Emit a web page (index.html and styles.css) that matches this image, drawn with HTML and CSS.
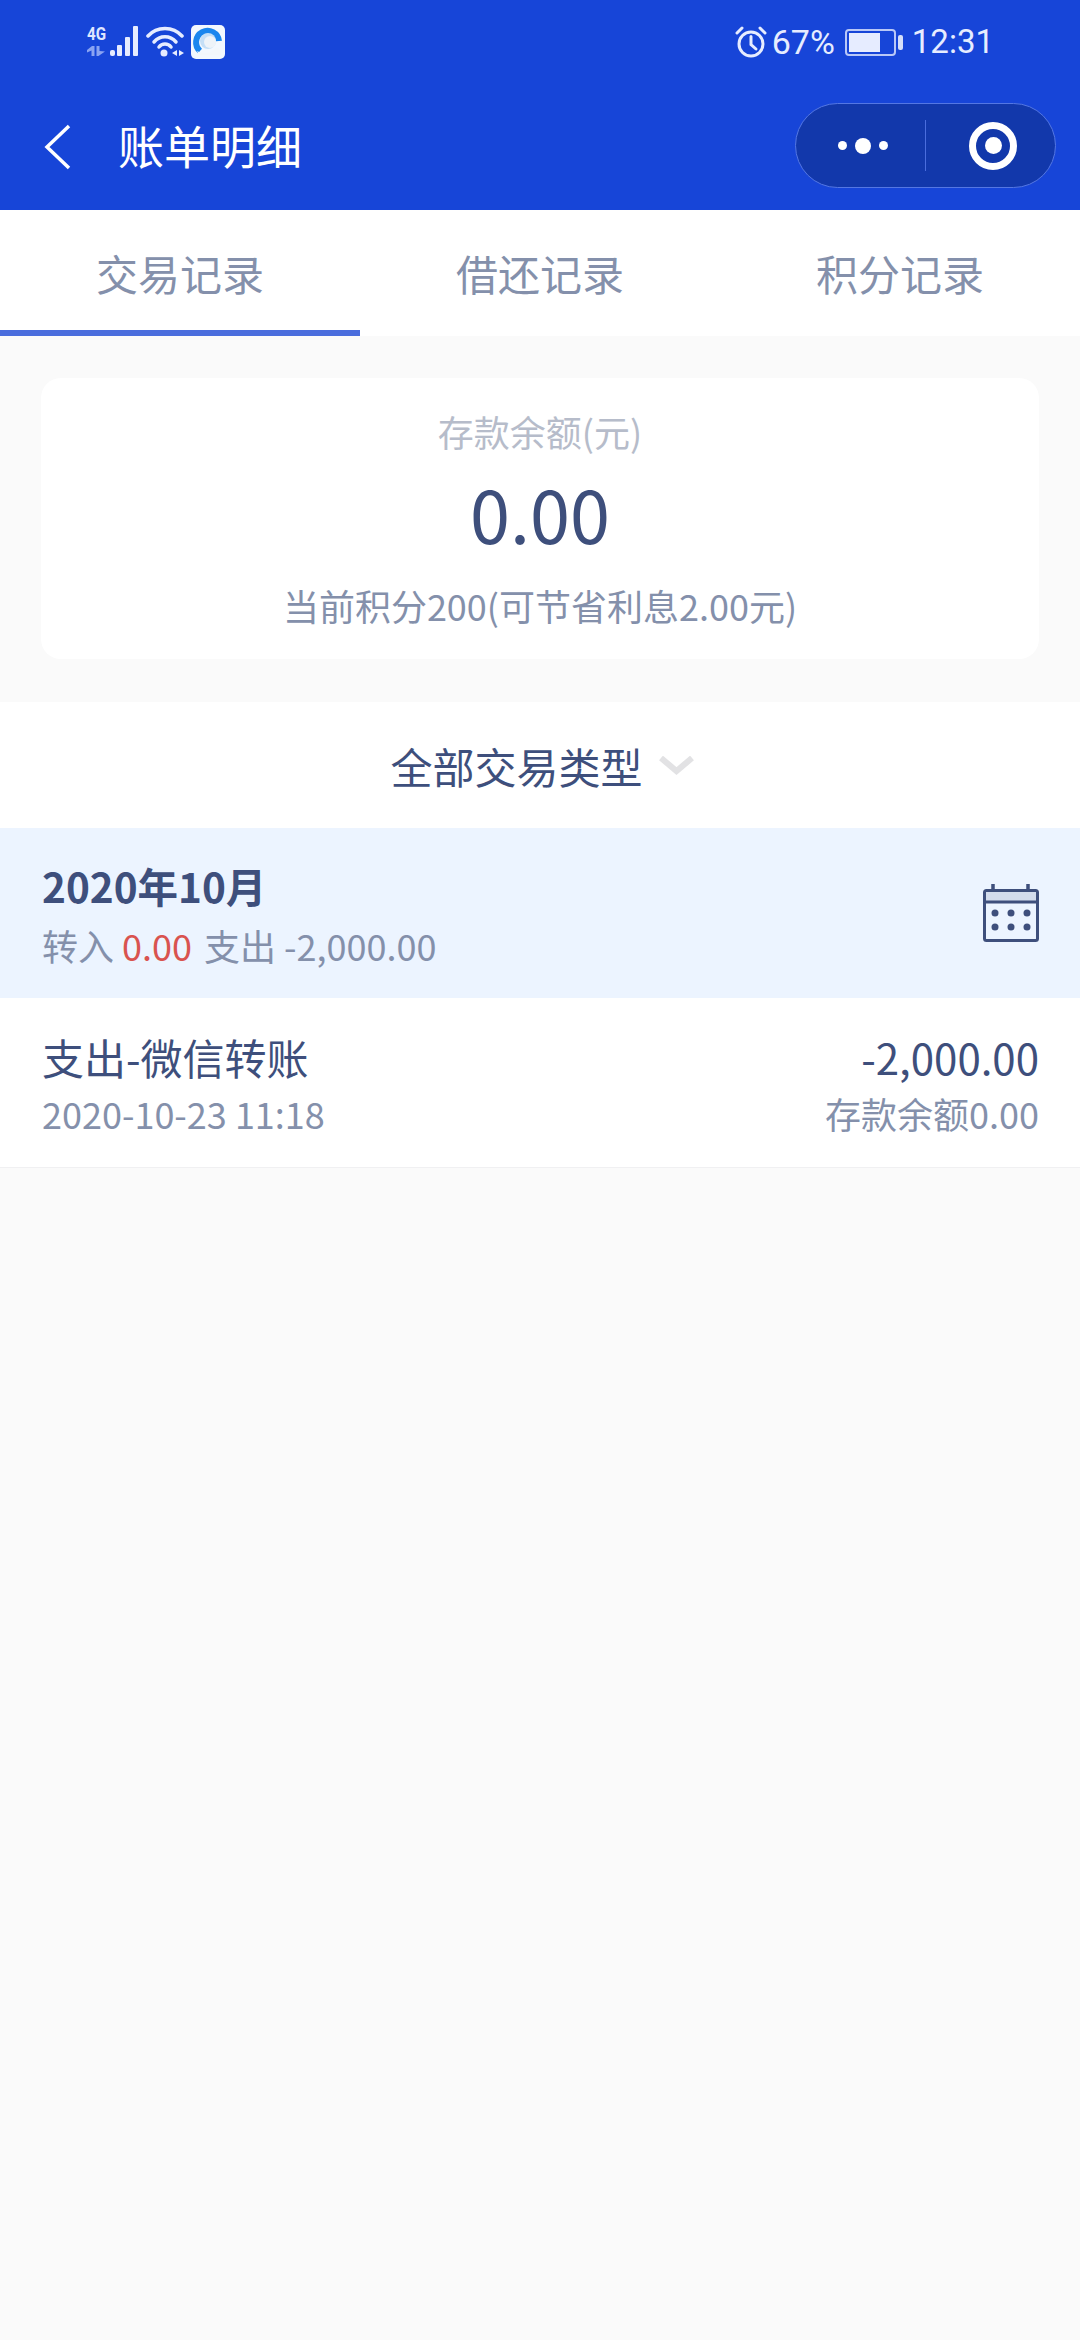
FILE: index.html
```html
<!DOCTYPE html>
<html lang="zh-CN">
<head>
<meta charset="utf-8">
<title>账单明细</title>
<link rel="stylesheet" href="styles.css">
</head>
<body>
<div class="page">
  <header class="head">
    <div class="status">
      <div class="status-left">
        <div class="net"><span class="net-4g">4G</span>
          <svg class="net-arrows" width="18" height="10" viewBox="0 0 18 10"><path d="M0 4 5 0H7.500V10H4.500V4.500L0 6.500zM9.500 0H12.500V5L18 5.500 11.500 10H9.500z" fill="#8aa3f2"/></svg>
        </div>
        <svg class="bars" width="28" height="30" viewBox="0 0 28 30"><g fill="#e6ecff"><rect x="0" y="24" width="5" height="6" rx="2"/><rect x="7" y="19" width="5" height="11" rx="1"/><rect x="15" y="11" width="5" height="19" rx="1"/><rect x="23" y="0" width="5" height="30" rx="1"/></g></svg>
        <svg class="wifi" width="38" height="31" viewBox="0 0 38 31"><g fill="none" stroke="#e6ecff" stroke-width="3.5" stroke-linecap="round"><path d="M2 10C11 0 27 0 36 10"/><path d="M8 16C14 9 24 9 30 16"/><path d="M13 21C16 17 22 17 25 21"/></g><circle cx="18" cy="27" r="3.5" fill="#e6ecff"/><path d="M31 24V30L26 27zM33 24V30L38 27z" fill="#e6ecff"/></svg>
        <svg class="qq" width="34" height="34" viewBox="0 0 34 34"><rect width="34" height="34" rx="5" fill="#f3f8fe"/><path d="M9 26A11.500 11.500 0 1 1 28 16" fill="none" stroke="#1a86ee" stroke-width="6"/><circle cx="17" cy="16" r="8" fill="#c5dff6"/><circle cx="19" cy="17" r="6" fill="#eef3f8"/><path d="M6 26C14 30 21 28 24 23 28 22 31 25 30 30H8z" fill="#f3f7fb"/></svg>
      </div>
      <div class="status-right">
        <svg class="alarm" width="32" height="32" viewBox="0 0 32 32"><g fill="none" stroke="#e6ecff" stroke-linecap="round"><circle cx="16" cy="18" r="12" stroke-width="3"/><path d="M16 10.500V18.500L21 23" stroke-width="3"/><path d="M2 7 7 2M30 7 25 2" stroke-width="3"/></g></svg>
        <span class="pct">67%</span>
        <div class="battery"><div class="battery-body"><div class="battery-fill"></div></div><div class="battery-cap"></div></div>
        <span class="clock">12:31</span>
      </div>
    </div>
    <nav class="nav">
      <svg class="back" width="28" height="46" viewBox="0 0 28 46"><path d="M25 2 3 23 25 44" fill="none" stroke="#fff" stroke-width="3.5"/></svg>
      <h1 class="title">账单明细</h1>
      <div class="capsule">
        <div class="cap-more"><i class="dot"></i><i class="dot dot-lg"></i><i class="dot"></i></div>
        <div class="cap-line"></div>
        <div class="cap-target"><i class="target-core"></i></div>
      </div>
    </nav>
  </header>

  <div class="tabs">
    <div class="tab tab-on">交易记录</div>
    <div class="tab">借还记录</div>
    <div class="tab">积分记录</div>
  </div>

  <section class="summary">
    <div class="card">
      <div class="card-label">存款余额(元)</div>
      <div class="card-amount">0.00</div>
      <div class="card-note">当前积分200(可节省利息2.00元)</div>
    </div>
  </section>

  <div class="filter">
    <span>全部交易类型</span>
    <svg class="chev" width="35" height="19" viewBox="0 0 35 19"><path d="M2 2 17.5 15 33 2" fill="none" stroke="#e2e2e4" stroke-width="6"/></svg>
  </div>

  <div class="month">
    <div>
      <div class="month-title">2020年10月</div>
      <div class="month-sub">转入 <span class="red">0.00</span><span class="sub-out">支出 -2,000.00</span></div>
    </div>
    <svg class="cal" width="56" height="58" viewBox="0 0 56 58"><rect x="1.5" y="6.5" width="53" height="50" rx="2" fill="none" stroke="#3e4f7c" stroke-width="3"/><path d="M3 8H53V17H3z" fill="#d3dcec"/><path d="M1.5 18H54.500" stroke="#3e4f7c" stroke-width="3"/><path d="M10 0V6M45 0V6" stroke="#3e4f7c" stroke-width="3.5"/><g fill="#3e4f7c"><circle cx="12" cy="29" r="3.500"/><circle cx="28" cy="29" r="3.500"/><circle cx="44" cy="29" r="3.500"/><circle cx="12" cy="43" r="3.500"/><circle cx="28" cy="43" r="3.500"/><circle cx="44" cy="43" r="3.500"/></g></svg>
  </div>

  <div class="item">
    <div>
      <div class="item-name">支出-微信转账</div>
      <div class="item-time">2020-10-23 11:18</div>
    </div>
    <div class="item-right">
      <div class="item-amount">-2,000.00</div>
      <div class="item-bal">存款余额0.00</div>
    </div>
  </div>
</div>
</body>
</html>
```
FILE: styles.css
```css
* { box-sizing: border-box; }
html, body { margin: 0; padding: 0; }
body {
  width: 1080px;
  height: 2340px;
  overflow: hidden;
  background: #fafafa;
  font-family: "Noto Sans CJK SC", "Noto Sans", sans-serif;
  color: #3e4f7c;
}
.page { display: flex; flex-direction: column; height: 100%; }

.head { height: 210px; background: #1745d8; color: #fff; flex: none; }
.status { height: 84px; display: flex; justify-content: space-between; align-items: center; padding: 0 86px 0 87px; }
.status-left { display: flex; align-items: flex-start; }
.net { width: 18px; height: 30px; display: flex; flex-direction: column; justify-content: space-between; }
.net-4g { font-family: "Roboto", sans-serif; font-size: 19px; line-height: 15px; font-weight: 700; color: #dfe6ff; transform: scaleX(.8); transform-origin: left; }
.net-arrows { display: block; }
.bars { margin-left: 5px; }
.wifi { margin-left: 8px; }
.qq { margin-left: 7px; margin-top: -1px; }
.status-right { display: flex; align-items: center; color: #e6ecff; }
.pct, .clock { font-family: "Roboto", sans-serif; line-height: 40px; }
.pct { font-size: 34px; margin-left: 5px; }
.clock { font-size: 33px; margin-left: 9px; }
.battery { display: flex; align-items: center; margin-left: 10px; }
.battery-body { width: 51px; height: 27px; border: 2px solid #b9c8f7; border-radius: 4px; padding: 2px; }
.battery-fill { width: 31px; height: 100%; background: #e6ecff; }
.battery-cap { width: 5px; height: 15px; margin-left: 2px; background: #d5dffa; border-radius: 2px; }

.nav { height: 126px; display: flex; align-items: center; padding: 0 24px 0 44px; }
.back { flex: none; }
.title { margin: -6px 0 0 46px; font-size: 46px; line-height: 60px; font-weight: 400; flex: 1; }
.capsule {
  width: 261px; height: 85px; display: flex; align-items: center;
  background: #1238ab; border: 1px solid #5477e3; border-radius: 43px;
  margin-top: -3px;
}
.cap-more { width: 129px; display: flex; align-items: center; justify-content: flex-end; gap: 8px; padding-right: 37px; }
.dot { width: 9px; height: 9px; border-radius: 50%; background: #fff; display: block; }
.dot-lg { width: 16px; height: 16px; }
.cap-line { width: 1px; height: 51px; background: #4a6ddd; }
.cap-target {
  width: 48px; height: 48px; margin-left: 43px; border: 7px solid #fff; border-radius: 50%;
  display: flex; align-items: center; justify-content: center;
}
.target-core { width: 17px; height: 17px; border-radius: 50%; background: #fff; display: block; }

.tabs { height: 126px; display: flex; background: #fff; flex: none; }
.tab { flex: 1; display: flex; justify-content: center; align-items: center; font-size: 42px; color: #8490ab; padding-bottom: 2px; }
.tab-on { box-shadow: inset 0 -6px 0 #4a6ddd; }

.summary { padding: 42px 41px 43px; flex: none; }
.card { height: 281px; background: #fff; border-radius: 20px; display: flex; flex-direction: column; align-items: center; }
.card-label { margin-top: 29px; font-size: 36px; line-height: 48px; color: #b6bcca; }
.card-amount { margin-top: 10px; font-size: 72px; line-height: 96px; color: #3e4f7c; }
.card-note { margin-top: 20px; font-size: 36px; line-height: 48px; color: #8490ab; }

.filter { height: 126px; background: #fff; display: flex; align-items: center; justify-content: center; gap: 16px; padding-left: 4px; font-size: 42px; color: #3e4f7c; flex: none; }

.month { height: 170px; background: #ecf4ff; display: flex; justify-content: space-between; align-items: center; padding: 0 41px 0 42px; flex: none; }
.month-title { font-size: 40.5px; line-height: 56px; font-weight: 700; color: #3e4f7c; }
.month-sub { font-size: 36px; line-height: 48px; color: #8490ab; margin-top: 7px; }
.red { color: #d9534f; }
.sub-out { margin-left: 12px; }
.cal { flex: none; }

.item { height: 170px; background: #fff; border-bottom: 1px solid #f0f0f2; display: flex; justify-content: space-between; align-items: center; padding: 2px 41px 0 42px; flex: none; }
.item-name { font-size: 42px; line-height: 54px; color: #3e4f7c; }
.item-time { font-size: 36px; line-height: 48px; color: #8490ab; margin-top: 5px; }
.item-right { text-align: right; }
.item-amount { font-size: 42px; line-height: 54px; color: #3e4f7c; }
.item-bal { font-size: 36px; line-height: 48px; color: #8490ab; margin-top: 5px; }
```
